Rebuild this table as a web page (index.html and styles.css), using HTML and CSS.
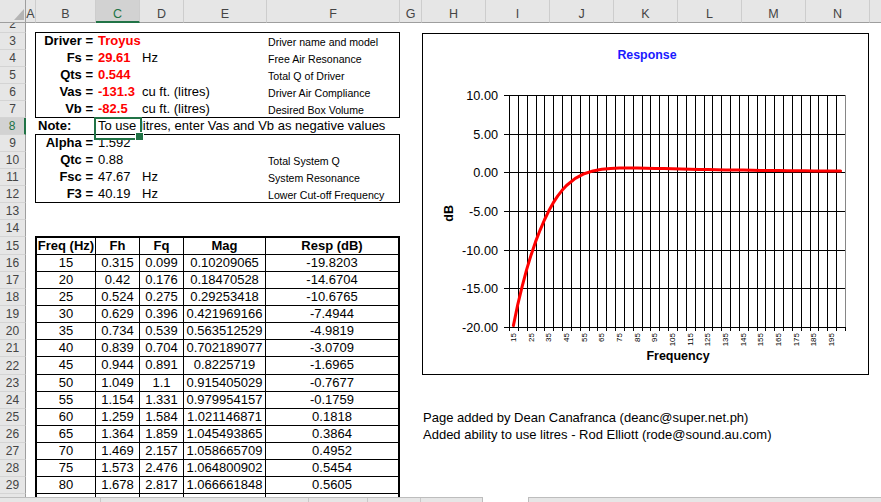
FILE: index.html
```html
<!DOCTYPE html>
<html>
<head>
<meta charset="utf-8">
<title>Closed Box Response</title>
<link rel="stylesheet" href="styles.css">
</head>
<body>
<div class="excel">
  <div class="colbar">
    <div class="hc corner"><svg width="10" height="11" viewBox="0 0 10 11"><polygon points="10,0 10,11 0,11" fill="#b4b4b4"/></svg></div>
    <div class="hc w-a">A</div>
    <div class="hc w-b">B</div>
    <div class="hc w-c sel">C</div>
    <div class="hc w-d">D</div>
    <div class="hc w-e">E</div>
    <div class="hc w-f">F</div>
    <div class="hc w-g">G</div>
    <div class="hc w-x">H</div>
    <div class="hc w-x">I</div>
    <div class="hc w-x">J</div>
    <div class="hc w-x">K</div>
    <div class="hc w-x">L</div>
    <div class="hc w-x">M</div>
    <div class="hc w-x">N</div>
    <div class="hc last"></div>
  </div>

  <div class="sheet">
    <div class="rowhdrs">
      <div class="rh r2"><span>2</span></div>
      <div class="rh">3</div>
      <div class="rh">4</div>
      <div class="rh">5</div>
      <div class="rh">6</div>
      <div class="rh">7</div>
      <div class="rh sel">8</div>
      <div class="rh">9</div>
      <div class="rh">10</div>
      <div class="rh">11</div>
      <div class="rh">12</div>
      <div class="rh">13</div>
      <div class="rh">14</div>
      <div class="rh tall">15</div>
      <div class="rh">16</div>
      <div class="rh">17</div>
      <div class="rh">18</div>
      <div class="rh">19</div>
      <div class="rh">20</div>
      <div class="rh">21</div>
      <div class="rh tall">22</div>
      <div class="rh">23</div>
      <div class="rh">24</div>
      <div class="rh">25</div>
      <div class="rh">26</div>
      <div class="rh">27</div>
      <div class="rh">28</div>
      <div class="rh">29</div>
      <div class="rh"></div>
    </div>

    <div class="left">
      <div class="sp2"></div>
      <div class="box">
        <div class="kv"><div class="lbl">Driver =</div><div class="val red">Troyus</div><div></div><div></div><div class="desc">Driver name and model</div></div>
        <div class="kv"><div class="lbl">Fs =</div><div class="val red">29.61</div><div class="unit">Hz</div><div></div><div class="desc">Free Air Resonance</div></div>
        <div class="kv"><div class="lbl">Qts =</div><div class="val red">0.544</div><div></div><div></div><div class="desc">Total Q of Driver</div></div>
        <div class="kv"><div class="lbl">Vas =</div><div class="val red">-131.3</div><div class="unit">cu ft. (litres)</div><div></div><div class="desc">Driver Air Compliance</div></div>
        <div class="kv"><div class="lbl">Vb =</div><div class="val red">-82.5</div><div class="unit">cu ft. (litres)</div><div></div><div class="desc">Desired Box Volume</div></div>
      </div>
      <div class="note"><div class="nb">Note:</div><div class="cur">To use litres, enter Vas and Vb as negative values</div></div>
      <div class="box">
        <div class="kv"><div class="lbl">Alpha =</div><div class="val">1.592</div><div></div><div></div><div></div></div>
        <div class="kv"><div class="lbl">Qtc =</div><div class="val">0.88</div><div></div><div></div><div class="desc">Total System Q</div></div>
        <div class="kv"><div class="lbl">Fsc =</div><div class="val">47.67</div><div class="unit">Hz</div><div></div><div class="desc">System Resonance</div></div>
        <div class="kv"><div class="lbl">F3 =</div><div class="val">40.19</div><div class="unit">Hz</div><div></div><div class="desc">Lower Cut-off Frequency</div></div>
      </div>
      <div class="sp13"></div>
      <div class="tbl">
        <div class="th">Freq (Hz)</div><div class="th">Fh</div><div class="th">Fq</div><div class="th">Mag</div><div class="th">Resp (dB)</div>
        <div>15</div><div>0.315</div><div>0.099</div><div>0.10209065</div><div>-19.8203</div>
        <div>20</div><div>0.42</div><div>0.176</div><div>0.18470528</div><div>-14.6704</div>
        <div>25</div><div>0.524</div><div>0.275</div><div>0.29253418</div><div>-10.6765</div>
        <div>30</div><div>0.629</div><div>0.396</div><div>0.421969166</div><div>-7.4944</div>
        <div>35</div><div>0.734</div><div>0.539</div><div>0.563512529</div><div>-4.9819</div>
        <div>40</div><div>0.839</div><div>0.704</div><div>0.702189077</div><div>-3.0709</div>
        <div>45</div><div>0.944</div><div>0.891</div><div>0.8225719</div><div>-1.6965</div>
        <div>50</div><div>1.049</div><div>1.1</div><div>0.915405029</div><div>-0.7677</div>
        <div>55</div><div>1.154</div><div>1.331</div><div>0.979954157</div><div>-0.1759</div>
        <div>60</div><div>1.259</div><div>1.584</div><div>1.021146871</div><div>0.1818</div>
        <div>65</div><div>1.364</div><div>1.859</div><div>1.045493865</div><div>0.3864</div>
        <div>70</div><div>1.469</div><div>2.157</div><div>1.058665709</div><div>0.4952</div>
        <div>75</div><div>1.573</div><div>2.476</div><div>1.064800902</div><div>0.5454</div>
        <div>80</div><div>1.678</div><div>2.817</div><div>1.066661848</div><div>0.5605</div>
        <div></div><div></div><div></div><div></div><div></div>
      </div>
    </div>

    <div class="right">
      <div class="credits">
        <div>Page added by Dean Canafranca (deanc@super.net.ph)</div>
        <div>Added ability to use litres - Rod Elliott (rode@sound.au.com)</div>
      </div>
    </div>

    <div class="chart">
      <svg class="plot" width="445" height="340" viewBox="0 0 445 340">
        <text class="ttl" x="224" y="24.5" text-anchor="middle">Response</text>
        <path class="grid" d="M95.5 61V293M104.5 61V293M113.5 61V293M121.5 61V293M130.5 61V293M139.5 61V293M148.5 61V293M157.5 61V293M166.5 61V293M174.5 61V293M183.5 61V293M192.5 61V293M201.5 61V293M210.5 61V293M219.5 61V293M227.5 61V293M236.5 61V293M245.5 61V293M254.5 61V293M263.5 61V293M272.5 61V293M281.5 61V293M289.5 61V293M298.5 61V293M307.5 61V293M316.5 61V293M325.5 61V293M334.5 61V293M342.5 61V293M351.5 61V293M360.5 61V293M369.5 61V293M378.5 61V293M387.5 61V293M395.5 61V293M404.5 61V293M413.5 61V293"/>
        <path class="grid" d="M86 61.5H422M86 100.5H422M86 138.5H422M86 177.5H422M86 216.5H422M86 254.5H422M86 293.5H423"/>
        <path class="grid" d="M86.5 61V294M81 61.5H86M81 100.5H86M81 138.5H86M81 177.5H86M81 216.5H86M81 254.5H86M81 293.5H86"/>
        <path class="grid" d="M86.5 293V297M95.5 293V297M104.5 293V297M113.5 293V297M121.5 293V297M130.5 293V297M139.5 293V297M148.5 293V297M157.5 293V297M166.5 293V297M174.5 293V297M183.5 293V297M192.5 293V297M201.5 293V297M210.5 293V297M219.5 293V297M227.5 293V297M236.5 293V297M245.5 293V297M254.5 293V297M263.5 293V297M272.5 293V297M281.5 293V297M289.5 293V297M298.5 293V297M307.5 293V297M316.5 293V297M325.5 293V297M334.5 293V297M342.5 293V297M351.5 293V297M360.5 293V297M369.5 293V297M378.5 293V297M387.5 293V297M395.5 293V297M404.5 293V297M413.5 293V297M422.5 293V297"/>
        <path class="edge" d="M422.5 61V293"/>
        <g class="ynum" text-anchor="end">
          <text x="75" y="66">10.00</text>
          <text x="75" y="105">5.00</text>
          <text x="75" y="143">0.00</text>
          <text x="75" y="182">-5.00</text>
          <text x="75" y="221">-10.00</text>
          <text x="75" y="259">-15.00</text>
          <text x="75" y="298">-20.00</text>
        </g>
        <g class="xnum" text-anchor="end">
          <text transform="translate(93 299) rotate(-90)">15</text>
          <text transform="translate(110.6 299) rotate(-90)">25</text>
          <text transform="translate(128.3 299) rotate(-90)">35</text>
          <text transform="translate(146 299) rotate(-90)">45</text>
          <text transform="translate(163.6 299) rotate(-90)">55</text>
          <text transform="translate(181.3 299) rotate(-90)">65</text>
          <text transform="translate(199 299) rotate(-90)">75</text>
          <text transform="translate(216.6 299) rotate(-90)">85</text>
          <text transform="translate(234.3 299) rotate(-90)">95</text>
          <text transform="translate(252 299) rotate(-90)">105</text>
          <text transform="translate(269.6 299) rotate(-90)">115</text>
          <text transform="translate(287.3 299) rotate(-90)">125</text>
          <text transform="translate(305 299) rotate(-90)">135</text>
          <text transform="translate(322.6 299) rotate(-90)">145</text>
          <text transform="translate(340.3 299) rotate(-90)">155</text>
          <text transform="translate(358 299) rotate(-90)">165</text>
          <text transform="translate(375.6 299) rotate(-90)">175</text>
          <text transform="translate(393.3 299) rotate(-90)">185</text>
          <text transform="translate(411 299) rotate(-90)">195</text>
        </g>
        <text class="axt" transform="translate(30.3 179.3) rotate(-90)" text-anchor="middle">dB</text>
        <text class="axt" x="255" y="325.5" text-anchor="middle">Frequency</text>
        <polyline class="curve" points="90.4,291.6 94.8,270.3 99.3,251.8 103.7,235.4 108.1,220.9 112.5,207.9 117,196.3 121.4,186 125.8,176.8 130.2,168.9 134.6,162.1 139.1,156.3 143.5,151.5 152.3,144.3 161.2,139.7 170,136.9 178.8,135.3 187.7,134.5 196.5,134.1 205.4,134 214.2,134 223.1,134.2 231.9,134.4 240.7,134.5 249.6,134.8 258.4,135 267.3,135.2 276.1,135.4 284.9,135.6 293.8,135.7 302.6,135.9 311.5,136 320.3,136.1 329.2,136.3 338,136.4 346.8,136.5 355.7,136.6 364.5,136.7 373.4,136.7 382.2,136.8 391,136.9 399.9,137 408.7,137 417.6,137.1"/>
      </svg>
    </div>
  </div>

  <div class="tabbar">
    <div class="tabs"><span class="t1"></span><span class="t2"></span><span class="t3"></span><span class="t4"></span><span class="t5"></span></div>
    <div class="tgap"></div>
    <div class="hscroll"></div>
  </div>
</div>
</body>
</html>
```

FILE: styles.css
```css
* { box-sizing: border-box; margin: 0; padding: 0; }
html, body { background: #fff; }
body {
  width: 881px;
  height: 502px;
  overflow: hidden;
  font-family: "Liberation Sans", Arial, sans-serif;
  font-size: 13px;
  color: #000;
}
.excel { display: flex; flex-direction: column; height: 502px; }

/* column headers */
.colbar { display: flex; height: 23px; flex: none; background: #e6e6e6; }
.hc {
  flex: none;
  height: 23px;
  border-right: 1px solid #cdcdcd;
  border-bottom: 1px solid #9e9e9e;
  text-align: center;
  font-size: 12.5px;
  line-height: 16px;
  padding-top: 6px;
  color: #444;
  white-space: nowrap;
}
.hc.corner {
  width: 26px;
  padding: 0 1px 2px 0;
  display: flex;
  align-items: flex-end;
  justify-content: flex-end;
  border-right-color: #9e9e9e;
}
.w-a { width: 10px; }
.w-b { width: 60px; }
.w-c { width: 44px; }
.w-d { width: 44px; }
.w-e { width: 83px; }
.w-f { width: 133px; }
.w-g { width: 22px; }
.w-x { width: 64px; }
.hc.last { flex: 1; border-right: none; }
.hc.sel { background: #d2d2d2; border-bottom: 2px solid #217346; color: #217346; }

/* sheet */
.sheet { position: relative; display: flex; height: 474px; flex: none; overflow: hidden; }
.rowhdrs { width: 26px; flex: none; background: #e6e6e6; }
.rh {
  height: 17px;
  border-right: 1px solid #9e9e9e;
  border-bottom: 1px solid #d4d4d4;
  text-align: center;
  font-size: 12px;
  line-height: 16px;
  color: #444;
  overflow: hidden;
}
.rh.tall { height: 18px; padding-top: 1px; }
.rh.r2 { height: 10px; }
.rh.r2 span { display: block; margin-top: -7px; }
.rh.sel { background: #d2d2d2; border-right: 2px solid #217346; color: #217346; }

.left { width: 374px; flex: none; }
.sp2 { height: 9px; }
.sp13 { height: 33px; }

.box { margin-left: 9px; width: 365px; border: 1px solid #000; }
.kv {
  display: grid;
  grid-template-columns: 59px 44px 44px 83px 133px;
  height: 17px;
  line-height: 16px;
  white-space: nowrap;
}
.box .kv:last-child { height: 16px; }
.lbl { text-align: right; font-weight: bold; padding-right: 2px; }
.val { padding-left: 3px; }
.red { color: #ff0000; font-weight: bold; }
.unit { padding-left: 3px; }
.desc { font-size: 10.6px; padding-left: 2px; padding-top: 1px; }

.note {
  display: grid;
  grid-template-columns: 60px 44px;
  margin-left: 9px;
  height: 16px;
  line-height: 16px;
  white-space: nowrap;
}
.nb { font-weight: bold; padding-left: 3px; }
.cur { position: relative; padding-left: 3px; }
.cur::after {
  content: "";
  position: absolute;
  left: -1px;
  top: -1px;
  width: 44px;
  height: 19px;
  border: 2px solid #217346;
}
.cur::before {
  content: "";
  position: absolute;
  left: 40px;
  top: 14px;
  width: 7px;
  height: 7px;
  background: #217346;
  border: 1px solid #fff;
  z-index: 1;
}

.tbl {
  margin-left: 9px;
  width: 365px;
  border: 2px solid #000;
  border-bottom: none;
  display: grid;
  grid-template-columns: 58px 43px 43px 81px 132px;
  grid-template-rows: repeat(7, 16px) 17px repeat(8, 16px);
  gap: 1px;
  background: #000;
}
.tbl div { background: #fff; text-align: center; line-height: 16px; white-space: nowrap; }
.tbl .th { font-weight: bold; }

.right { flex: 1; padding-left: 23px; }
.credits { margin-top: 386px; line-height: 17px; white-space: nowrap; }

/* chart */
.chart {
  position: absolute;
  left: 422px;
  top: 10px;
  width: 447px;
  height: 342px;
  border: 1px solid #000;
  background: #fff;
}
.plot { display: block; }
.grid { stroke: #000; stroke-width: 1; fill: none; shape-rendering: crispEdges; }
.edge { stroke: #868686; stroke-width: 1; fill: none; shape-rendering: crispEdges; }
.ttl { font-size: 12.4px; font-weight: bold; fill: #1a1aff; }
.ynum { font-size: 12.7px; fill: #000; }
.xnum { font-size: 8px; fill: #000; }
.axt { font-size: 12.5px; font-weight: bold; fill: #000; }
.curve { fill: none; stroke: #ff0000; stroke-width: 3; stroke-linejoin: round; stroke-linecap: round; }

/* bottom tab bar */
.tabbar { display: flex; height: 5px; flex: none; }
.tabs {
  width: 483px;
  display: flex;
  background: #e6e6e6;
  border-top: 1px solid #bdbdbd;
  border-right: 1px solid #bdbdbd;
}
.tabs span { border-right: 1px solid #c8c8c8; }
.t1 { width: 101px; }
.t2 { width: 208px; }
.t3 { width: 59px; }
.t4 { width: 53px; }
.t5 { flex: 1; border-right: none !important; }
.tgap { width: 45px; background: #fff; }
.hscroll { flex: 1; background: #e6e6e6; border-top: 1px solid #bdbdbd; border-left: 1px solid #bdbdbd; }
```
